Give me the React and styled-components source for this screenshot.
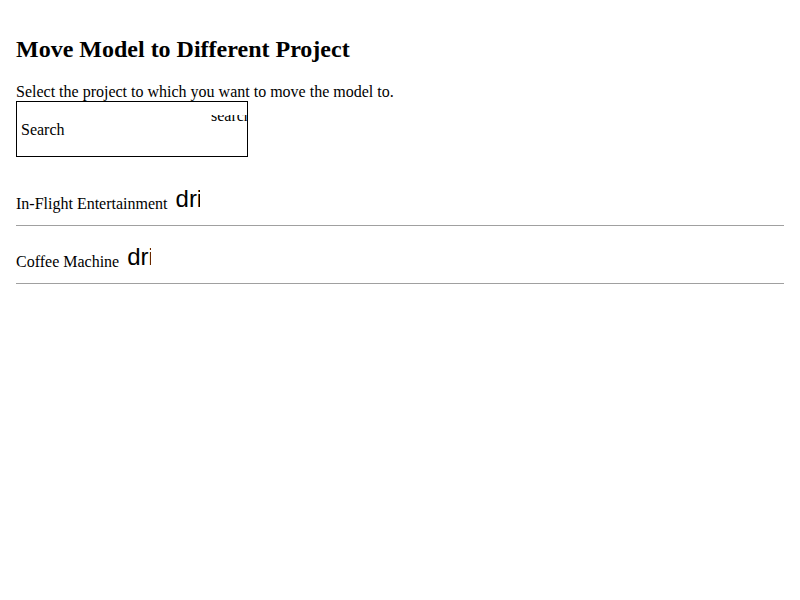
import React from 'react'
import styled, { createGlobalStyle } from 'styled-components'

const GlobalStyle = createGlobalStyle`
  body {
    margin: 8px;
    font-family: "Liberation Serif", "Times New Roman", serif;
    font-size: 16px;
    color: #000;
    background: #fff;
  }
`

const Page = styled.div`
  padding: 8px;
`

const Title = styled.h2`
  font-size: 24px;
  font-weight: bold;
  margin: 19.92px 0;
`

const Hint = styled.p`
  margin: 16px 0 0;
`

const SearchBox = styled.div`
  position: relative;
  box-sizing: border-box;
  width: 232px;
  height: 56px;
  border: 1px solid #000;
  display: flex;
  align-items: center;
  padding: 2px 0 0 4px;
  overflow: hidden;
`

const IconClip = styled.span`
  position: absolute;
  top: 13px;
  left: 194px;
  width: 80px;
  height: 7px;
  overflow: hidden;
  white-space: nowrap;
`

const IconText = styled.span`
  display: block;
  line-height: 18px;
  margin-top: -7.4px;
`

const ProjectList = styled.div`
  margin-top: 11px;
`

const ProjectRow = styled.div`
  padding: 19px 0 12px;
  border-bottom: 1px solid #a0a0a0;
`

const ProjectIcon = styled.span`
  display: inline-block;
  vertical-align: -2px;
  width: 24px;
  height: 24px;
  margin-left: 8px;
  overflow: hidden;
  white-space: nowrap;
  font-family: "Liberation Sans", Arial, sans-serif;
  font-size: 24px;
  line-height: 1;
`

const projects = ['In-Flight Entertainment', 'Coffee Machine']

export default function App() {
  return (
    <>
      <GlobalStyle />
      <Page>
        <Title>Move Model to Different Project</Title>
        <Hint>Select the project to which you want to move the model to.</Hint>
        <SearchBox>
          Search
          <IconClip>
            <IconText>search</IconText>
          </IconClip>
        </SearchBox>
        <ProjectList>
          {projects.map((name) => (
            <ProjectRow key={name}>
              {name}
              <ProjectIcon>drive_file_move</ProjectIcon>
            </ProjectRow>
          ))}
        </ProjectList>
      </Page>
    </>
  )
}
